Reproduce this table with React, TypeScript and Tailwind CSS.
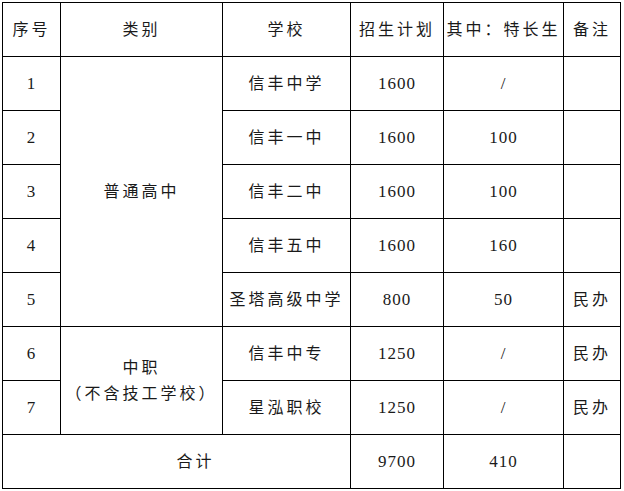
const rows = [
  { no: '1', school: '信丰中学', plan: '1600', special: '/', note: '' },
  { no: '2', school: '信丰一中', plan: '1600', special: '100', note: '' },
  { no: '3', school: '信丰二中', plan: '1600', special: '100', note: '' },
  { no: '4', school: '信丰五中', plan: '1600', special: '160', note: '' },
  { no: '5', school: '圣塔高级中学', plan: '800', special: '50', note: '民办' },
  { no: '6', school: '信丰中专', plan: '1250', special: '/', note: '民办' },
  { no: '7', school: '星泓职校', plan: '1250', special: '/', note: '民办' },
];

const cell = 'border border-black text-center align-middle p-0 font-normal';
const cjk = 'tracking-[3px] text-[16px]';
const num = 'tracking-[1px] text-[17px]';

export default function App() {
  return (
    <div
      className="w-[624px] h-[491px] bg-white pt-[2px] pl-[2px] text-[#1a1a1a]"
      style={{ fontFamily: '"Liberation Serif", "Noto Sans CJK SC", serif' }}
    >
      <table className="border-collapse table-fixed w-[618px]">
        <colgroup>
          <col className="w-[58px]" />
          <col className="w-[162px]" />
          <col className="w-[128px]" />
          <col className="w-[93px]" />
          <col className="w-[120px]" />
          <col className="w-[57px]" />
        </colgroup>
        <tbody>
          <tr className="h-[54px]">
            <td className={`${cell} ${cjk}`}>序号</td>
            <td className={`${cell} ${cjk}`}>类别</td>
            <td className={`${cell} ${cjk}`}>学校</td>
            <td className={`${cell} ${cjk}`}>招生计划</td>
            <td className={`${cell} ${cjk}`}>其中：特长生</td>
            <td className={`${cell} ${cjk}`}>备注</td>
          </tr>
          {rows.map((r, i) => (
            <tr key={r.no} className="h-[54px]">
              <td className={`${cell} ${num}`}>{r.no}</td>
              {i === 0 && (
                <td rowSpan={5} className={`${cell} ${cjk}`}>
                  普通高中
                </td>
              )}
              {i === 5 && (
                <td rowSpan={2} className={`${cell} ${cjk} leading-[26px]`}>
                  中职
                  <br />
                  （不含技工学校）
                </td>
              )}
              <td className={`${cell} ${cjk}`}>{r.school}</td>
              <td className={`${cell} ${num}`}>{r.plan}</td>
              <td className={`${cell} ${num}`}>{r.special}</td>
              <td className={`${cell} ${cjk}`}>{r.note}</td>
            </tr>
          ))}
          <tr className="h-[54px]">
            <td colSpan={3} className={`${cell} ${cjk} pl-[38px]`}>
              合计
            </td>
            <td className={`${cell} ${num}`}>9700</td>
            <td className={`${cell} ${num}`}>410</td>
            <td className={cell}></td>
          </tr>
        </tbody>
      </table>
    </div>
  );
}
